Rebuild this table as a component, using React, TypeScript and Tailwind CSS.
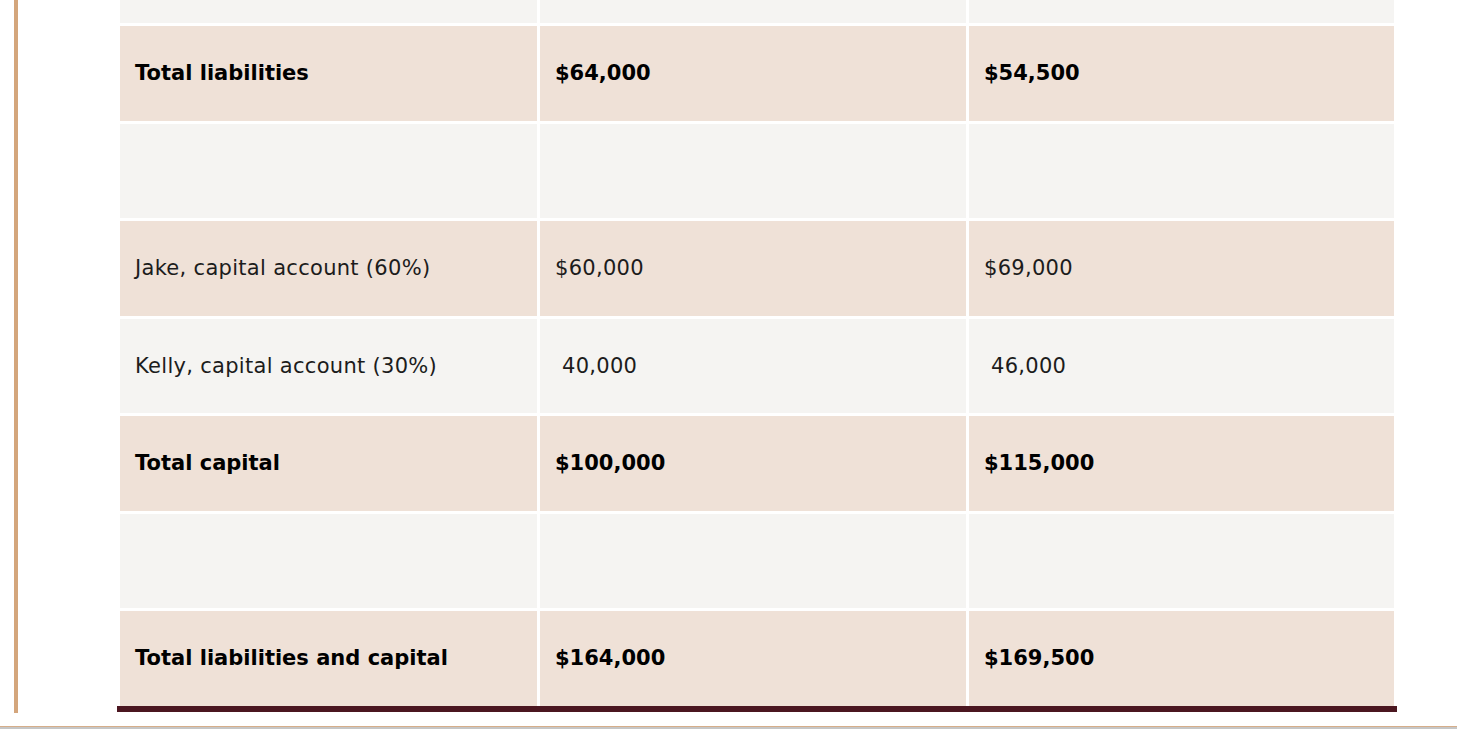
const rows: { label: string; a: string; b: string; tone: "beige" | "gray"; bold?: boolean }[] = [
  { label: "Total liabilities", a: "$64,000", b: "$54,500", tone: "beige", bold: true },
  { label: "", a: "", b: "", tone: "gray" },
  { label: "Jake, capital account (60%)", a: "$60,000", b: "$69,000", tone: "beige" },
  { label: "Kelly, capital account (30%)", a: "\u00a040,000", b: "\u00a046,000", tone: "gray" },
  { label: "Total capital", a: "$100,000", b: "$115,000", tone: "beige", bold: true },
  { label: "", a: "", b: "", tone: "gray" },
  { label: "Total liabilities and capital", a: "$164,000", b: "$169,500", tone: "beige", bold: true },
];

function Cell({ children, tone, bold }: { children?: React.ReactNode; tone: "beige" | "gray"; bold?: boolean }) {
  return (
    <div
      className={
        "flex items-center px-[15px] pt-[1px] whitespace-pre " +
        (tone === "beige" ? "bg-[#efe1d7] " : "bg-[#f5f4f2] ") +
        (bold ? "font-bold text-black" : "text-[#1c1c1c] tracking-[0.3px]")
      }
    >
      {children}
    </div>
  );
}

export default function App() {
  return (
    <div className="h-[729px] overflow-hidden bg-white font-['DejaVu_Sans',Verdana,sans-serif] text-[21px]">
      <div className="ml-[14px] border-l-4 border-[#d4a67c] pl-[99px] pb-[1.5px]">
        <div className="w-[1280px] border-b-[6px] border-[#4b1620] px-[3px]">
          <div className="grid grid-cols-[417px_426px_425px] gap-[3px] auto-rows-[94.5px] grid-rows-[23px]">
            <Cell tone="gray" />
            <Cell tone="gray" />
            <Cell tone="gray" />
            {rows.map((r, i) => (
              <div key={i} className="contents">
                <Cell tone={r.tone} bold={r.bold}>{r.label}</Cell>
                <Cell tone={r.tone} bold={r.bold}>{r.a}</Cell>
                <Cell tone={r.tone} bold={r.bold}>{r.b}</Cell>
              </div>
            ))}
          </div>
        </div>
      </div>
      <div className="mt-[13px] h-[3px] border-t border-[#d6ae8a] bg-[#c6c6c6]" />
    </div>
  );
}
